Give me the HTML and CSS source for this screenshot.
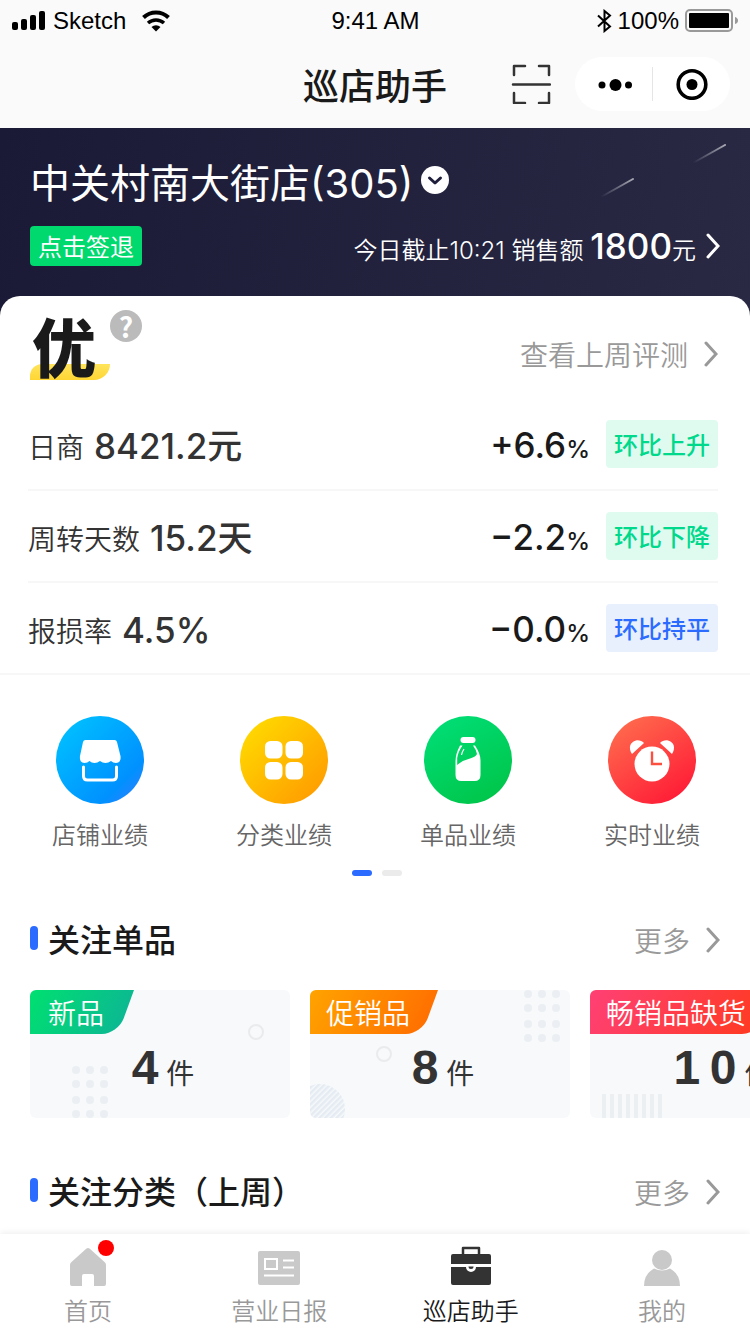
FILE: index.html
```html
<!DOCTYPE html>
<html lang="zh-CN">

<head>
    <meta charset="UTF-8">
    <meta name="viewport" content="width=device-width, initial-scale=1.0">
    <title>巡店助手</title>
    <!--css样式表-->
    <link rel="stylesheet" href="styles.css">
</head>

<body>

    <!-- 状态栏 -->
    <div class="status-bar">
        <div class="status-left">
            <svg class="signal" width="33" height="22" viewBox="0 0 33 22">
                <rect x="0" y="12" width="6" height="8" rx="2"/>
                <rect x="9" y="9" width="6" height="11" rx="2"/>
                <rect x="18" y="5" width="6" height="15" rx="2"/>
                <rect x="27" y="1" width="6" height="19" rx="2"/>
            </svg>
            <span>Sketch</span>
            <svg class="wifi" width="28" height="22" viewBox="0 0 28 22">
                <path d="M1.500 7.500A18 18 0 0 1 26.500 7.500" fill="none" stroke="#000" stroke-width="4"/>
                <path d="M6 13A12 12 0 0 1 22 13" fill="none" stroke="#000" stroke-width="3.500"/>
                <path d="M9.500 17a6.500 6.500 0 0 1 9 0L14 21.500z"/>
            </svg>
        </div>
        <div class="status-time">9:41 AM</div>
        <div class="status-right">
            <svg width="16" height="24" viewBox="0 0 16 24">
                <path d="M2 6.500l12 11L8.500 22V2L14 6.500l-12 11" fill="none" stroke="#000" stroke-width="2"/>
            </svg>
            <span>100%</span>
            <svg class="battery" width="54" height="24" viewBox="0 0 54 24">
                <rect x="1" y="1" width="46" height="21" rx="4" fill="none" stroke="#999" stroke-width="2"/>
                <rect x="4" y="4" width="40" height="15" rx="1"/>
                <path d="M50 8q3 1 3 3.500t-3 3.500z" fill="#999"/>
            </svg>
        </div>
    </div>

    <!-- 导航栏 -->
    <header class="nav">
        <h1 class="nav-title">巡店助手</h1>
        <div class="nav-tools">
            <button type="button" class="scan" aria-label="扫一扫">
                <svg width="40" height="40" viewBox="0 0 40 40" fill="none" stroke="#333" stroke-width="2.500" stroke-linecap="round" stroke-linejoin="round">
                    <path d="M3 11V2H14M28 2H38V11M38 29V39H28M14 39H3V29M2 20.500H39"/>
                </svg>
            </button>
            <div class="capsule">
                <button type="button" aria-label="菜单">
                    <svg width="36" height="14" viewBox="0 0 36 14">
                        <circle cx="6" cy="8" r="3.500"/>
                        <circle cx="19.500" cy="8" r="6"/>
                        <circle cx="32.500" cy="8" r="3.500"/>
                    </svg>
                </button>
                <i class="capsule-line"></i>
                <button type="button" aria-label="关闭">
                    <svg width="32" height="32" viewBox="0 0 32 32">
                        <circle cx="16" cy="16.500" r="13.800" fill="none" stroke="#000" stroke-width="3.600"/>
                        <circle cx="16" cy="16.500" r="5.500"/>
                    </svg>
                </button>
            </div>
        </div>
    </header>

    <!-- 页面内容 begin -->
    <main class="page">

        <!-- 门店信息 -->
        <section class="store">
            <svg class="meteor" width="128" height="56" viewBox="0 0 128 56" fill="none" stroke-width="2" stroke-linecap="round">
                <defs>
                    <linearGradient id="meteor" x1="0" y1="1" x2="1" y2="0">
                        <stop offset="0" stop-color="#fff" stop-opacity="0"/>
                        <stop offset="1" stop-color="#fff" stop-opacity=".6"/>
                    </linearGradient>
                </defs>
                <path d="M2 53L34 35" stroke="url(#meteor)"/>
                <path d="M94 19L126 1" stroke="url(#meteor)"/>
            </svg>
            <button type="button" class="store-name">
                <span>中关村南大街店(305)</span>
                <svg width="28" height="28" viewBox="0 0 28 28">
                    <circle cx="14" cy="14" r="14" fill="#fff"/>
                    <path d="M8.500 12l5.500 5L19.500 12" fill="none" stroke="#1f1f3c" stroke-width="3" stroke-linecap="round" stroke-linejoin="round"/>
                </svg>
            </button>
            <div class="store-row">
                <button type="button" class="sign-btn">点击签退</button>
                <a href="#" class="sales">
                    <span>今日截止10:21 销售额 <b>1800</b>元</span>
                    <svg class="arrow" width="14" height="26" viewBox="0 0 14 26"><path d="M2 2l10 11L2 24"/></svg>
                </a>
            </div>
        </section>

        <!-- 评测数据 -->
        <section class="report">
            <div class="report-head">
                <div class="grade">优</div>
                <button type="button" class="help" aria-label="评级说明">?</button>
                <a href="#" class="more">查看上周评测
                    <svg class="arrow" width="14" height="26" viewBox="0 0 14 26"><path d="M2 2l10 11L2 24"/></svg>
                </a>
            </div>
            <ul class="data-list">
                <li>
                    <span class="data-name">日商</span><b class="data-value">8421.2元</b>
                    <span class="data-rate">+6.6<small>%</small></span>
                    <span class="tag">环比上升</span>
                </li>
                <li>
                    <span class="data-name">周转天数</span><b class="data-value">15.2天</b>
                    <span class="data-rate">−2.2<small>%</small></span>
                    <span class="tag">环比下降</span>
                </li>
                <li>
                    <span class="data-name">报损率</span><b class="data-value">4.5%</b>
                    <span class="data-rate">−0.0<small>%</small></span>
                    <span class="tag tag-blue">环比持平</span>
                </li>
            </ul>
        </section>

        <!-- 业绩入口 -->
        <nav class="entry">
            <a href="#">
                <span class="entry-icon blue">
                    <svg width="88" height="88" viewBox="0 0 88 88" fill="#fff">
                        <path d="M29.500 24h29q2 0 2.500 2l3.600 14.500q.6 6-4.600 6.500-3 0-5-2-2.500 2-5.500 2-3 0-5.500-2-2.500 2-5.500 2t-5-2q-2 2-5 2-5.200-.5-4.600-6.500L27 26q.5-2 2.500-2z"/>
                        <path d="M27.500 51v9q0 4 4 4h25q4 0 4-4v-9" fill="none" stroke="#fff" stroke-width="3" stroke-linecap="round"/>
                    </svg>
                </span>
                店铺业绩
            </a>
            <a href="#">
                <span class="entry-icon yellow">
                    <svg width="88" height="88" viewBox="0 0 88 88" fill="#fff">
                        <rect x="25" y="25" width="17.500" height="17.500" rx="5.500"/>
                        <rect x="45.500" y="25" width="17.500" height="17.500" rx="5.500"/>
                        <rect x="25" y="46" width="17.500" height="17.500" rx="5.500"/>
                        <rect x="45.500" y="46" width="17.500" height="17.500" rx="5.500"/>
                    </svg>
                </span>
                分类业绩
            </a>
            <a href="#">
                <span class="entry-icon green">
                    <svg width="88" height="88" viewBox="0 0 88 88" fill="#fff">
                        <rect x="36.500" y="21" width="15" height="6" rx="3"/>
                        <path fill-rule="evenodd" d="M36 29.500h2.500Q34 36 33.200 42v7Q38 44.500 46 42.500q6-2 7-4.500-1-4.500-4-8.500h2q5.500 8 5.500 15V59q0 6-6 6h-13q-6 0-6-6V45q0-7 4.500-15.500z"/>
                        <path d="M40 33q-2 3-2.500 6" fill="none" stroke="#fff" stroke-width="1.200"/>
                    </svg>
                </span>
                单品业绩
            </a>
            <a href="#">
                <span class="entry-icon red">
                    <svg width="88" height="88" viewBox="0 0 88 88" fill="#fff">
                        <circle cx="44" cy="48" r="17.500"/>
                        <path d="M24 38c-4-6-2-12 4-13.500 3-.5 6 .5 8 2.500zM64 38c4-6 2-12-4-13.500-3-.5-6 .5-8 2.500z"/>
                        <path d="M44 35.500v12.500h10" fill="none" stroke="#fd4f40" stroke-width="2.400"/>
                    </svg>
                </span>
                实时业绩
            </a>
        </nav>
        <div class="pager"><i class="on"></i><i></i></div>

        <!-- 关注单品 -->
        <div class="section-head">
            <h2>关注单品</h2>
            <a href="#" class="more">更多
                <svg class="arrow" width="14" height="26" viewBox="0 0 14 26"><path d="M2 2l10 11L2 24"/></svg>
            </a>
        </div>
        <div class="cards">
            <a href="#" class="card">
                <svg class="card-bg" width="260" height="128" viewBox="0 0 260 128">
                    <circle cx="226" cy="42" r="7" fill="none" stroke="#e9ebed" stroke-width="2"/>
                    <g fill="#ebeff3">
                        <circle cx="46" cy="80" r="4"/><circle cx="60" cy="80" r="4"/><circle cx="74" cy="80" r="4"/>
                        <circle cx="46" cy="94" r="4"/><circle cx="60" cy="94" r="4"/><circle cx="74" cy="94" r="4"/>
                        <circle cx="46" cy="110" r="4"/><circle cx="60" cy="110" r="4"/><circle cx="74" cy="110" r="4"/>
                        <circle cx="46" cy="124" r="4"/><circle cx="60" cy="124" r="4"/><circle cx="74" cy="124" r="4"/>
                    </g>
                </svg>
                <span class="ribbon ribbon-green">新品</span>
                <span class="count"><b>4</b>件</span>
            </a>
            <a href="#" class="card">
                <svg class="card-bg" width="260" height="128" viewBox="0 0 260 128">
                    <defs>
                        <pattern id="stripe" width="4" height="4" patternUnits="userSpaceOnUse" patternTransform="rotate(45)">
                            <rect width="2.500" height="4" fill="#e4ebf2"/>
                        </pattern>
                    </defs>
                    <circle cx="74" cy="64" r="7" fill="none" stroke="#e9ebed" stroke-width="2"/>
                    <circle cx="10" cy="119" r="25" fill="url(#stripe)"/>
                    <g fill="#ebeff3">
                        <circle cx="218" cy="4" r="4"/><circle cx="232" cy="4" r="4"/><circle cx="246" cy="4" r="4"/>
                        <circle cx="218" cy="18" r="4"/><circle cx="232" cy="18" r="4"/><circle cx="246" cy="18" r="4"/>
                        <circle cx="218" cy="34" r="4"/><circle cx="232" cy="34" r="4"/><circle cx="246" cy="34" r="4"/>
                        <circle cx="218" cy="48" r="4"/><circle cx="232" cy="48" r="4"/><circle cx="246" cy="48" r="4"/>
                    </g>
                </svg>
                <span class="ribbon ribbon-orange">促销品</span>
                <span class="count"><b>8</b>件</span>
            </a>
            <a href="#" class="card">
                <svg class="card-bg" width="260" height="128" viewBox="0 0 260 128">
                    <path d="M14 104v24M22 104v24M30 104v24M38 104v24M46 104v24M54 104v24M62 104v24M70 104v24" stroke="#ebeff2" stroke-width="4"/>
                </svg>
                <span class="ribbon ribbon-red">畅销品缺货</span>
                <span class="count"><b>1&thinsp;0</b>件</span>
            </a>
        </div>

        <!-- 关注分类 -->
        <div class="section-head section-next">
            <h2>关注分类（上周）</h2>
            <a href="#" class="more">更多
                <svg class="arrow" width="14" height="26" viewBox="0 0 14 26"><path d="M2 2l10 11L2 24"/></svg>
            </a>
        </div>

    </main>
    <!-- 页面内容到此结束 -->

    <!-- 底部菜单 -->
    <nav class="tabs">
        <a href="#">
            <svg width="44" height="44" viewBox="0 0 44 44" fill="#c9c9c9">
                <path d="M20.500 2.500q1.500-1.200 3 0L38.500 16q1.500 1.200 1.500 3v19q0 2-2 2H28V30q0-2-2-2h-8q-2 0-2 2v10H6q-2 0-2-2V19q0-1.800 1.500-3z"/>
            </svg>
            首页
            <i class="dot"></i>
        </a>
        <a href="#">
            <svg width="44" height="44" viewBox="0 0 44 44">
                <rect x="1" y="5" width="42" height="34" rx="2" fill="#c9c9c9"/>
                <path d="M8 13h12v10H8zM26 14.500h11M26 21.500h11M7 29.500h30" fill="none" stroke="#fff" stroke-width="2"/>
            </svg>
            营业日报
        </a>
        <a href="#" class="active">
            <svg width="44" height="44" viewBox="0 0 44 44" fill="#333">
                <path d="M14 8V2h16v6" fill="none" stroke="#333" stroke-width="2.500" stroke-linejoin="round"/>
                <path d="M4 8h36q2 0 2 2v8H2v-8q0-2 2-2zM2 21h15a5 5 0 0 0 10 0h15v16q0 2-2 2H4q-2 0-2-2z"/>
                <path d="M19.500 20.500h5a2.500 2.500 0 0 1-5 0z"/>
            </svg>
            巡店助手
        </a>
        <a href="#">
            <svg width="44" height="44" viewBox="0 0 44 44" fill="#c9c9c9">
                <circle cx="22" cy="14" r="10"/>
                <path d="M4 40q0-12 10-17.500 8 4 16 0Q40 28 40 40z"/>
            </svg>
            我的
        </a>
    </nav>

</body>

</html>
```
FILE: styles.css
```css
*{
    box-sizing: border-box;
    margin: 0;
    padding: 0;
}

body{
    display: flex;
    flex-direction: column;
    height: 100vh;
    background-color: #fff;
    color: #333;
    font-family: "Noto Sans CJK SC", sans-serif;
    font-size: 24px;
}

a{
    color: inherit;
    text-decoration: none;
}

button{
    border: 0;
    background: none;
    color: inherit;
    font: inherit;
}

svg{
    display: block;
    flex: none;
}

ul{
    list-style: none;
}

/* 状态栏 */
.status-bar{
    display: grid;
    grid-template-columns: 1fr auto 1fr;
    align-items: center;
    height: 40px;
    padding: 2px 11px 0 12px;
    background-color: #fafafa;
    color: #000;
    font-family: "Liberation Sans", Arial, sans-serif;
}

.status-left, .status-right{
    display: flex;
    align-items: center;
    gap: 8px;
}

.status-right{
    justify-content: flex-end;
    gap: 6px;
}

.wifi{
    margin-left: 8px;
}

/* 导航栏 */
.nav{
    display: grid;
    grid-template-columns: 1fr auto 1fr;
    align-items: center;
    height: 88px;
    padding: 0 20px;
    background-color: #fafafa;
}

.nav-title{
    grid-column: 2;
    color: #1a1a1a;
    font-family: "Inter", "Noto Sans CJK SC", sans-serif;
    font-size: 36px;
    font-weight: 500;
}

.nav-tools{
    display: flex;
    justify-content: flex-end;
    align-items: center;
    gap: 24px;
}

.capsule{
    display: flex;
    align-items: center;
    height: 54px;
    border-radius: 27px;
    background-color: #fff;
}

.capsule button{
    display: flex;
    justify-content: center;
    align-items: center;
    width: 77px;
    height: 54px;
}

.capsule-line{
    width: 1px;
    height: 34px;
    background-color: #e5e5e5;
}

.page{
    flex: 1;
    min-height: 0;
    overflow-y: auto;
    scrollbar-width: none;
}

/* 门店信息 */
.store{
    position: relative;
    padding: 28px 30px 50px;
    background: linear-gradient(100deg, #1a1a36, #292944);
    color: #fff;
}

.meteor{
    position: absolute;
    top: 16px;
    right: 23px;
}

.store-name{
    display: flex;
    align-items: center;
    gap: 8px;
    height: 56px;
    font-family: "Inter", "Noto Sans CJK SC", sans-serif;
    font-size: 40px;
    line-height: 56px;
}

.store-name svg{
    margin-bottom: 8px;
}

.store-row{
    display: flex;
    justify-content: space-between;
    align-items: center;
    height: 40px;
    margin-top: 14px;
}

.sign-btn{
    height: 40px;
    padding: 0 8px;
    border-radius: 4px;
    background-color: #00d96d;
    line-height: 40px;
}

.sales{
    display: flex;
    align-items: center;
    gap: 10px;
    font-family: "Inter", "Noto Sans CJK SC", sans-serif;
    font-weight: 350;
    line-height: 40px;
}

.sales span{
    padding-top: 4px;
}

.sales b{
    font-size: 35px;
    font-weight: 500;
}

.arrow{
    fill: none;
    stroke: currentColor;
    stroke-width: 3;
    stroke-linecap: round;
}

.more{
    display: flex;
    align-items: center;
    gap: 16px;
    margin-left: auto;
    color: #999;
    font-size: 28px;
    font-weight: 350;
}

/* 评测数据 */
.report{
    margin-top: -20px;
    position: relative;
    border-radius: 20px 20px 0 0;
    border-bottom: 2px solid #f7f7f7;
    background-color: #fff;
}

.report-head{
    display: flex;
    height: 103px;
    padding: 14px 32px 0 30px;
}

.grade{
    position: relative;
    z-index: 0;
    width: 80px;
    height: 70px;
    padding-left: 2px;
    color: #1a1a1a;
    font-size: 64px;
    font-weight: 900;
    line-height: 68px;
}

/* 评级底部黄色色块 */
.grade::before{
    content: "";
    position: absolute;
    z-index: -1;
    bottom: 0;
    left: 0;
    width: 80px;
    height: 16px;
    border-radius: 12px 0 16px 0;
    background: linear-gradient(#ffe45c, #ffd633);
}

.help{
    width: 32px;
    height: 32px;
    border-radius: 50%;
    background-color: #bbb;
    color: #fff;
    font-size: 28px;
    font-weight: 700;
    line-height: 32px;
}

.report-head .more{
    height: 88px;
}

.data-list li{
    display: flex;
    align-items: center;
    height: 92px;
    margin: 0 32px 0 28px;
    border-bottom: 2px solid #f7f7f7;
    line-height: 48px;
}

.data-list li:last-child{
    height: 90px;
    border-bottom: 0;
}

.data-name{
    margin-right: 10px;
    padding-top: 4px;
    font-size: 28px;
    font-weight: 350;
}

.data-value, .data-rate{
    padding-top: 4px;
    font-family: "Inter", "Noto Sans CJK SC", sans-serif;
    font-size: 35px;
    font-weight: 500;
}

.data-rate{
    margin-left: auto;
    margin-right: 16px;
    padding-top: 6px;
    color: #1a1a1a;
}

.data-rate small{
    font-size: 24px;
}

.tag{
    height: 48px;
    padding: 0 8px;
    border-radius: 4px;
    background-color: #dffbf0;
    color: #00d98b;
    font-weight: 500;
}

.tag-blue{
    background-color: #e8f0fe;
    color: #2b6bff;
}

/* 业绩入口 */
.entry{
    display: grid;
    grid-template-columns: repeat(4, 1fr);
    padding: 41px 6px 0 8px;
    color: #666;
    font-weight: 350;
    line-height: 32px;
    text-align: center;
}

.entry-icon{
    display: block;
    width: 88px;
    height: 88px;
    margin: 0 auto 14px;
    border-radius: 50%;
}

.blue{
    background: linear-gradient(135deg, #00bfff 10%, #0091ff 75%, #3d7bff);
}

.yellow{
    background: linear-gradient(135deg, #ffd900 10%, #ff9500);
}

.green{
    background: linear-gradient(150deg, #00e07a, #00c244);
}

.red{
    background: linear-gradient(145deg, #ff6a4d 10%, #ff1133);
}

.pager{
    display: flex;
    justify-content: center;
    gap: 10px;
    margin: 20px 0 38px 4px;
}

.pager i{
    width: 20px;
    height: 6px;
    border-radius: 3px;
    background-color: #ebebeb;
}

.pager .on{
    background-color: #2b6bff;
}

/* 标题 */
.section-head{
    display: flex;
    align-items: center;
    height: 48px;
    padding: 0 30px;
}

.section-head h2{
    display: flex;
    align-items: center;
    gap: 10px;
    color: #1a1a1a;
    font-size: 32px;
    font-weight: 500;
    line-height: 44px;
}

.section-head h2::before{
    content: "";
    width: 8px;
    height: 24px;
    border-radius: 4px;
    background-color: #2b6bff;
}

.section-head .more{
    padding-top: 4px;
}

.section-next{
    margin-top: 48px;
}

/* 单品卡片 */
.cards{
    display: flex;
    gap: 20px;
    margin-top: 28px;
    padding: 0 30px;
    overflow-x: auto;
    scrollbar-width: none;
}

.card{
    position: relative;
    flex: none;
    width: 260px;
    height: 128px;
    border-radius: 6px;
    overflow: hidden;
    background-color: #f7f9fb;
}

.card-bg{
    position: absolute;
    top: 0;
    left: 0;
}

.ribbon{
    display: block;
    position: relative;
    z-index: 1;
    width: fit-content;
    min-width: 104px;
    height: 44px;
    padding: 0 28px 0 16px;
    color: #fff;
    font-size: 28px;
    font-weight: 350;
    line-height: 44px;
    text-align: center;
}

/* 斜边色块 */
.ribbon::before{
    content: "";
    position: absolute;
    z-index: -1;
    top: 0;
    bottom: 0;
    left: -20px;
    right: 0;
    border-bottom-right-radius: 16px;
    transform: skewX(-20deg);
    transform-origin: right top;
}

.ribbon-green::before{
    background: linear-gradient(100deg, #00e070 15%, #0cb892);
}

.ribbon-orange::before{
    background: linear-gradient(100deg, #ffa200 15%, #ff6f00);
}

.ribbon-red::before{
    background: linear-gradient(100deg, #ff4070 15%, #ff3a20);
}

.count{
    display: flex;
    position: relative;
    justify-content: center;
    align-items: baseline;
    gap: 8px;
    padding-left: 6px;
    font-size: 28px;
    line-height: 68px;
}

.count b{
    font-family: "Liberation Sans", Arial, sans-serif;
    font-size: 48px;
}

/* 底部菜单 */
.tabs{
    display: flex;
    position: relative;
    justify-content: space-between;
    height: 100px;
    padding: 12px 40px 0;
    background-color: #fff;
    box-shadow: 0 -2px 6px rgba(0,0,0,0.06);
    color: #999;
    font-weight: 350;
    line-height: 28px;
    text-align: center;
}

.tabs a{
    position: relative;
    width: 96px;
}

.tabs svg{
    margin: 0 auto 6px;
}

.tabs .active{
    color: #1a1a1a;
}

.dot{
    position: absolute;
    top: -6px;
    right: 22px;
    width: 16px;
    height: 16px;
    border-radius: 50%;
    background-color: #f00;
}
```
